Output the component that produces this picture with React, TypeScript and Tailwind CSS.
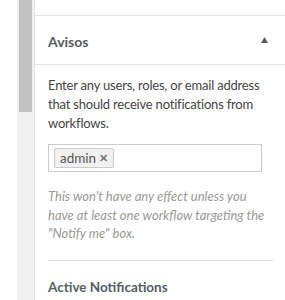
export default function App() {
  return (
    <div className="flex h-[300px] w-[285px] overflow-hidden bg-white font-['Lato',sans-serif]">
      <div className="w-[17px] shrink-0 bg-white" />
      <div className="w-[17px] shrink-0 bg-[#f0f0f0] px-[2px]">
        <div className="h-[112px] w-full bg-[#c1c1c1]" />
      </div>
      <div className="w-px shrink-0 bg-[#e2e4e7]" />
      <div className="flex min-w-0 flex-1 flex-col">
        <div className="h-4 shrink-0 border-b border-[#e2e4e7]" />
        <div className="flex h-[49px] shrink-0 items-center justify-between border-b border-[#e2e4e7] pl-[13px] pr-[17px]">
          <span className="pt-[2px] text-[14px] font-bold text-[#555d66]">Avisos</span>
          <svg width="7" height="6" viewBox="0 0 7 6">
            <path d="M3.5 0 L7 6 L0 6 Z" fill="#555d66" />
          </svg>
        </div>
        <div className="pl-[13px] pr-[12px] pt-[11px]">
          <p className="text-[13px] leading-[19px] tracking-[-0.2px] text-[#444]">
            Enter any users, roles, or email address that should receive notifications from workflows.
          </p>
          <div className="mt-[11px] flex h-[28px] w-[214px] items-center border border-[#ccc] px-[5px]">
            <span className="flex h-[20px] w-[60px] items-center justify-between rounded-[2px] border border-[#ccc] bg-[#f1f1f1] px-[5px] text-[13.5px] text-[#555]">
              admin
              <span className="text-[11px] font-bold text-[#777]">✕</span>
            </span>
          </div>
          <p className="mt-[15px] text-[13px] italic leading-[18.5px] text-[#999]">
            This won't have any effect unless you have at least one workflow targeting the "Notify me" box.
          </p>
          <div className="mt-[17px] mr-[-1px] border-t border-[#e8e8e8]" />
          <div className="pt-[17px] text-[13.5px] font-bold leading-[19px] text-[#555d66]">Active Notifications</div>
        </div>
      </div>
    </div>
  );
}
